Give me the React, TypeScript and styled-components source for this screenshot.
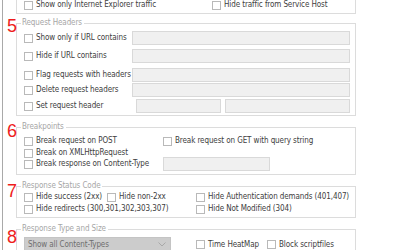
import styled, { createGlobalStyle } from "styled-components";

const Global = createGlobalStyle`
  html, body {
    margin: 0;
    background: #ffffff;
  }
  body {
    font-family: "DejaVu Sans Condensed", "Liberation Sans", sans-serif;
    font-size: 8px;
    letter-spacing: -0.1px;
    color: #404040;
  }
`;

export default function App() {
  return (
    <>
      <Global />
      <Frame>
        <Group $top={-10} $pb={2}>
          <Row $cols="188px 1fr" $h={12} $mt={8}>
            <Check label="Show only Internet Explorer traffic" />
            <Check label="Hide traffic from Service Host" />
          </Row>
        </Group>

        <Group $top={9}>
          <Marker $top={-7}>5</Marker>
          <Title>Request Headers</Title>
          <Row $cols="108px 1fr" $mt={2}>
            <Check label="Show only if URL contains" />
            <TextBox />
          </Row>
          <Row $cols="108px 1fr" $mt={4}>
            <Check label="Hide if URL contains" />
            <TextBox />
          </Row>
          <Row $cols="108px 1fr" $mt={5}>
            <Check label="Flag requests with headers" />
            <TextBox />
          </Row>
          <Row $cols="108px 1fr" $mt={1}>
            <Check label="Delete request headers" />
            <TextBox />
          </Row>
          <Row $cols="108px 85px 1fr" $mt={2} $gap={4}>
            <Check label="Set request header" />
            <TextBox />
            <TextBox />
          </Row>
        </Group>

        <Group $top={11} $pb={3}>
          <Marker $top={-6}>6</Marker>
          <Title>Breakpoints</Title>
          <Row $cols="139px 1fr" $h={12} $mt={2}>
            <Check label="Break request on POST" />
            <Check label="Break request on GET with query string" />
          </Row>
          <Row $cols="139px 1fr" $h={12}>
            <Check label="Break on XMLHttpRequest" />
          </Row>
          <Row $cols="139px 107px" $mt={-2}>
            <Check label="Break response on Content-Type" />
            <TextBox />
          </Row>
        </Group>

        <Group $top={11}>
          <Marker $top={-5}>7</Marker>
          <Title>Response Status Code</Title>
          <Row $cols="83px 89px 1fr" $h={12} $mt={-1}>
            <Check label="Hide success (2xx)" />
            <Check label="Hide non-2xx" />
            <Check label="Hide Authentication demands (401,407)" />
          </Row>
          <Row $cols="172px 1fr" $h={12}>
            <Check label="Hide redirects (300,301,302,303,307)" />
            <Check label="Hide Not Modified (304)" />
          </Row>
        </Group>

        <Group $top={11}>
          <Marker $top={-2}>8</Marker>
          <Title>Response Type and Size</Title>
          <Row $cols="172px 71px 1fr" $h={15} $mt={2}>
            <Select>
              <span>Show all Content-Types</span>
              <svg width="8" height="5" viewBox="0 0 8 5">
                <path d="M0.5 0.5 L4 4 L7.5 0.5" fill="none" stroke="#a8a8a8" strokeWidth="1" />
              </svg>
            </Select>
            <Check label="Time HeatMap" />
            <Check label="Block scriptfiles" />
          </Row>
          <Row $cols="243px 1fr" $h={12}>
            <span />
            <Check />
          </Row>
        </Group>
      </Frame>
    </>
  );
}

function Check({ label }: { label?: string }) {
  return (
    <CheckLabel>
      <Box />
      {label && <span>{label}</span>}
    </CheckLabel>
  );
}

const Frame = styled.div`
  height: 250px;
  overflow: hidden;
  margin-left: 2px;
  border-left: 1px solid #a9a9a9;
  padding-left: 13px;
  width: 340px;
`;

const Group = styled.div<{ $top: number; $pb?: number }>`
  position: relative;
  margin-top: ${(p) => p.$top}px;
  border: 1px solid #dcdcdc;
  padding: 0 5px ${(p) => p.$pb ?? 2}px 7px;
`;

const Title = styled.div`
  width: fit-content;
  margin: -7px 0 0 -3px;
  padding: 0 2px 0 1px;
  line-height: 12px;
  background: #ffffff;
  color: #a6a6a6;
`;

const Marker = styled.div<{ $top: number }>`
  position: absolute;
  left: -10px;
  top: ${(p) => p.$top}px;
  font-family: "Liberation Sans", sans-serif;
  font-size: 18px;
  line-height: 18px;
  letter-spacing: 0;
  color: #ee1c1c;
`;

const Row = styled.div<{ $cols: string; $h?: number; $mt?: number; $gap?: number }>`
  display: grid;
  grid-template-columns: ${(p) => p.$cols};
  column-gap: ${(p) => p.$gap ?? 0}px;
  align-items: center;
  height: ${(p) => p.$h ?? 14}px;
  margin-top: ${(p) => p.$mt ?? 0}px;
`;

const CheckLabel = styled.label`
  display: flex;
  align-items: center;
  gap: 3px;
  white-space: nowrap;
  line-height: 12px;
`;

const Box = styled.span`
  flex: none;
  box-sizing: border-box;
  width: 9px;
  height: 9px;
  border: 1px solid #b9b9b9;
  background: #ffffff;
`;

const TextBox = styled.div`
  box-sizing: border-box;
  height: 14px;
  border: 1px solid #d9d9d9;
  background: #f0f0f0;
`;

const Select = styled.div`
  box-sizing: border-box;
  width: 147px;
  height: 15px;
  display: flex;
  align-items: center;
  justify-content: space-between;
  padding: 0 4px 0 3px;
  background: #cccccc;
  border: 1px solid #c4c4c4;
  color: #6e6e6e;
`;
